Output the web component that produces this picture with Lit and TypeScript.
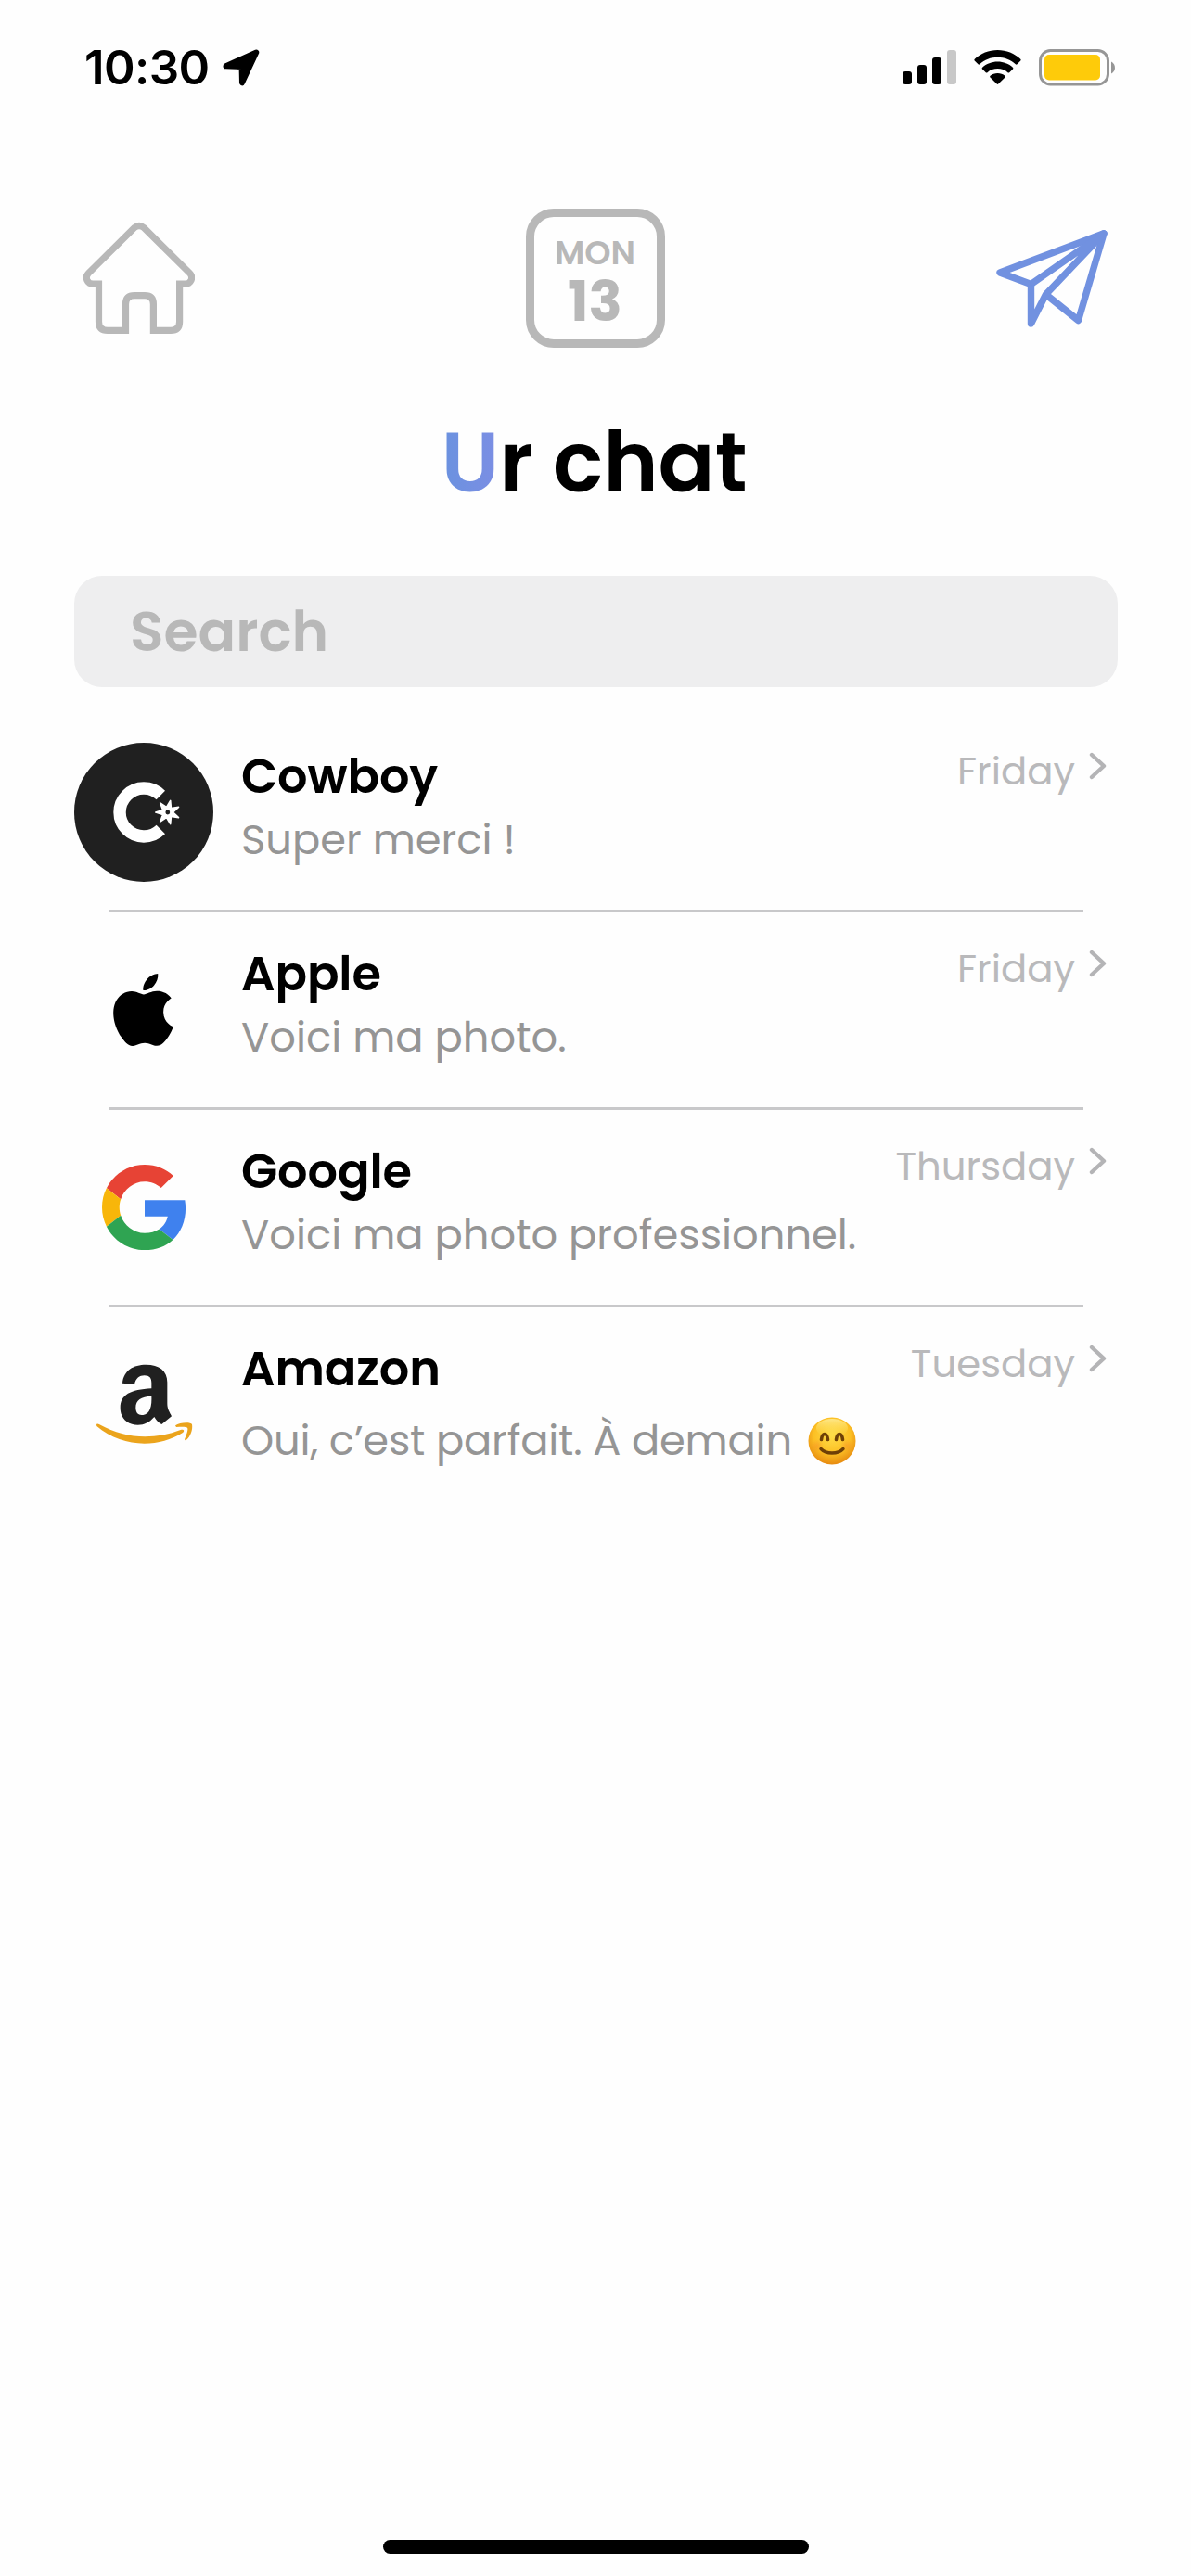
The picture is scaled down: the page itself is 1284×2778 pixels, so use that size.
import { LitElement, html, css, TemplateResult } from "lit";
import { customElement, property } from "lit/decorators.js";

interface Chat {
  name: string;
  message: string;
  day: string;
  logo: TemplateResult;
  emoji?: boolean;
}

const starPoints = Array.from({ length: 14 }, (_, i) => {
  const angle = Math.PI + (i * Math.PI) / 7;
  const r = i % 2 === 0 ? 13 : 5.8;
  return `${(100.8 + r * Math.cos(angle)).toFixed(2)},${(75 + r * Math.sin(angle)).toFixed(2)}`;
}).join(" ");

const cowboyLogo = html`<svg class="logo" viewBox="0 0 150 150" role="img" aria-label="Cowboy">
  <circle cx="75" cy="75" r="75" fill="#202020" />
  <path d="M95.500 56.500A26 26 0 1 0 95.500 93.500" transform="translate(-2.200 0)" fill="none" stroke="#fff" stroke-width="13.400" />
  <circle cx="100.800" cy="75" r="10.500" fill="#202020" />
  <polygon points=${starPoints} fill="#fff" stroke="#fff" stroke-width="1.600" stroke-linejoin="round" />
  <circle cx="100.800" cy="75" r="2.400" fill="#202020" />
</svg>`;

const appleLogo = html`<svg class="logo" viewBox="0 0 150 150" role="img" aria-label="Apple">
  <g transform="translate(34.900 36) scale(3.300 3.250)">
    <path
      d="M12.152 6.896c-.948 0-2.415-1.078-3.96-1.04-2.04.027-3.91 1.183-4.961 3.014-2.117 3.675-.546 9.103 1.519 12.09 1.013 1.454 2.208 3.09 3.792 3.039 1.52-.065 2.09-.987 3.935-.987 1.831 0 2.35.987 3.96.948 1.637-.026 2.676-1.48 3.676-2.948 1.156-1.688 1.636-3.325 1.662-3.415-.039-.013-3.182-1.221-3.22-4.857-.026-3.04 2.48-4.494 2.597-4.559-1.429-2.09-3.623-2.324-4.39-2.376-2-.156-3.675 1.09-4.61 1.09zM15.53 3.83c.843-1.012 1.4-2.427 1.245-3.83-1.207.052-2.662.805-3.532 1.818-.78.896-1.454 2.338-1.273 3.714 1.338.104 2.715-.688 3.559-1.701"
    />
  </g>
</svg>`;

const googleLogo = html`<svg class="logo" viewBox="0 0 150 150" role="img" aria-label="Google">
  <g transform="translate(30 29) scale(1.917)">
    <path fill="#e74335" d="M24 9.5c3.54 0 6.71 1.22 9.21 3.6l6.85-6.85C35.9 2.38 30.47 0 24 0 14.62 0 6.51 5.38 2.56 13.22l7.98 6.19C12.43 13.72 17.74 9.5 24 9.5z" />
    <path fill="#3f81ee" d="M46.98 24.55c0-1.57-.15-3.09-.38-4.55H24v9.02h12.94c-.58 2.96-2.26 5.48-4.78 7.18l7.73 6c4.51-4.18 7.09-10.36 7.09-17.65z" />
    <path fill="#f8b60a" d="M10.53 28.59c-.48-1.45-.76-2.99-.76-4.59s.27-3.14.76-4.59l-7.98-6.19C.92 16.46 0 20.12 0 24c0 3.88.92 7.54 2.56 10.78l7.97-6.19z" />
    <path fill="#2fa452" d="M24 48c6.48 0 11.93-2.13 15.89-5.81l-7.73-6c-2.15 1.45-4.92 2.3-8.16 2.3-6.26 0-11.57-4.22-13.47-9.91l-7.98 6.19C6.51 42.62 14.62 48 24 48z" />
  </g>
</svg>`;

const amazonLogo = html`<svg class="logo" viewBox="30 60 450 450" role="img" aria-label="Amazon">
  <path
    fill="#202020"
    d="M186 215C190 173 222 155 262 155C305 155 331 174 331 212V280C331 298 336 304 345 322L313 348C304 345 296 335 289 324C273 342 257 350 236 350C202 350 179 328 179 295C179 252 212 236 280 232V214C280 198 274 190 257 190C241 190 229 199 225 219ZM280 257C246 258 229 270 229 294C229 309 236 318 248 318C270 318 282 300 280 257Z"
  />
  <path
    fill="#eba41c"
    d="M102 350C103 345 107 346 112 349C198 397 290 398 374 366C384 363 388 369 381 375C300 426 184 423 103 354Z"
  />
  <path fill="#eba41c" d="M357 352C370 342 406 340 411 348C414 366 406 388 392 399C388 401 386 398 388 394C396 375 399 363 396 359C390 355 372 357 360 357Z" />
</svg>`;

const emoji = html`<svg class="emoji" viewBox="0 0 52 52" role="img" aria-label="😊">
  <defs>
    <radialGradient id="face" cx=".5" cy=".38" r=".64">
      <stop offset="0" stop-color="#ffdc48" />
      <stop offset=".6" stop-color="#fcc024" />
      <stop offset="1" stop-color="#e5850e" />
    </radialGradient>
    <linearGradient id="shine" x1="0" y1="0" x2="0" y2="1">
      <stop offset="0" stop-color="#fff3a8" stop-opacity=".75" />
      <stop offset="1" stop-color="#ffe04a" stop-opacity="0" />
    </linearGradient>
    <radialGradient id="blush">
      <stop offset="0" stop-color="#f5802a" stop-opacity=".4" />
      <stop offset="1" stop-color="#f5802a" stop-opacity="0" />
    </radialGradient>
  </defs>
  <circle cx="26" cy="26" r="25.500" fill="url(#face)" />
  <ellipse cx="26" cy="12" rx="17" ry="10" fill="url(#shine)" />
  <circle cx="10" cy="31" r="7" fill="url(#blush)" />
  <circle cx="42" cy="31" r="7" fill="url(#blush)" />
  <g fill="none" stroke="#6f4007" stroke-linecap="round">
    <path d="M14.500 24.500C15.500 16.500 20.500 16.500 21.500 24.500M30.500 24.500C31.500 16.500 36.500 16.500 37.500 24.500" stroke-width="3.600" />
    <path d="M14 34.500C19.500 40.500 32.500 40.500 38 34.500" stroke-width="3.400" />
  </g>
</svg>`;

const chats: Chat[] = [
  { name: "Cowboy", message: "Super merci !", day: "Friday", logo: cowboyLogo },
  { name: "Apple", message: "Voici ma photo.", day: "Friday", logo: appleLogo },
  { name: "Google", message: "Voici ma photo professionnel.", day: "Thursday", logo: googleLogo },
  { name: "Amazon", message: "Oui, c’est parfait. À demain", day: "Tuesday", logo: amazonLogo, emoji: true },
];

@customElement("status-bar")
class StatusBar extends LitElement {
  static styles = css`
    :host {
      display: flex;
      justify-content: space-between;
      align-items: center;
      height: 145px;
      padding: 0 82px 0 91px;
      box-sizing: border-box;
    }
    .time {
      display: flex;
      align-items: center;
      gap: 14px;
      font: 600 51px/60px Inter, sans-serif;
      letter-spacing: -0.6px;
    }
    svg {
      display: block;
    }
  `;
  render() {
    return html`
      <div class="time">
        <span>10:30</span>
        <svg width="40" height="40" viewBox="0 0 40 40">
          <path d="M36.300 3.500L21 36.300L20.600 19L3.500 18.300Z" stroke="#000" stroke-width="6" stroke-linejoin="round" />
        </svg>
      </div>
      <svg width="229" height="40" viewBox="973 53 229 40">
        <rect x="973" y="77" width="10" height="14" rx="3" />
        <rect x="989" y="70" width="10" height="21" rx="3" />
        <rect x="1005" y="62" width="10" height="29" rx="3" />
        <rect x="1021" y="54" width="10" height="37" rx="3" fill="#c8c8c8" />
        <path
          d="M1075.500 54C1085 54 1093.800 57.600 1100.200 63.800C1100.800 64.400 1100.800 65 1100.300 65.500L1096.500 69.300C1096 69.800 1095.400 69.800 1094.800 69.300C1089.500 64.400 1082.800 61.700 1075.500 61.700S1061.500 64.400 1056.200 69.300C1055.600 69.800 1055 69.800 1054.500 69.300L1050.700 65.500C1050.200 65 1050.200 64.400 1050.800 63.800C1057.200 57.600 1066 54 1075.500 54Z"
        />
        <path
          d="M1075.500 66.500C1081.800 66.500 1087.600 68.800 1091.900 72.700C1092.500 73.300 1092.500 73.900 1092 74.400L1088.200 78.200C1087.700 78.700 1087.100 78.700 1086.500 78.200C1083.500 75.600 1079.700 74.100 1075.500 74.100S1067.500 75.600 1064.500 78.200C1063.900 78.700 1063.300 78.700 1062.800 78.200L1059 74.400C1058.500 73.900 1058.500 73.300 1059.100 72.700C1063.400 68.800 1069.200 66.500 1075.500 66.500Z"
        />
        <path
          d="M1075.500 79C1078.500 79 1081.300 80 1083.400 81.800C1084 82.300 1084 82.900 1083.500 83.400L1076.300 90.600C1075.800 91.100 1075.200 91.100 1074.700 90.600L1067.500 83.400C1067 82.900 1067 82.300 1067.600 81.800C1069.700 80 1072.500 79 1075.500 79Z"
        />
        <rect x="1121.500" y="54.500" width="73" height="36.500" rx="11" fill="none" stroke="#969696" stroke-width="3" />
        <rect x="1126" y="59" width="60" height="27.500" rx="5" fill="#fecb0a" />
        <path d="M1198 66.500C1203.300 69 1203.300 77 1198 79.500Z" fill="#969696" />
      </svg>
    `;
  }
}

@customElement("nav-bar")
class NavBar extends LitElement {
  static styles = css`
    :host {
      display: flex;
      justify-content: space-between;
      margin-top: 80px;
      padding: 0 90px;
    }
    svg {
      display: block;
    }
    .calendar {
      box-sizing: border-box;
      width: 150px;
      height: 150px;
      padding: 21px 1px 0 0;
      border: 9px solid #b8b8b8;
      border-radius: 30px;
      color: #b8b8b8;
      text-align: center;
      display: flex;
      flex-direction: column;
      gap: 4px;
    }
    .weekday {
      font-size: 36px;
      line-height: 36px;
      font-weight: 600;
    }
    .date {
      font-size: 60px;
      line-height: 60px;
      font-weight: 700;
    }
  `;
  render() {
    return html`
      <svg width="120" height="150" viewBox="90 225 120 150" fill="none" stroke="#b8b8b8" stroke-width="7.200">
        <path
          d="M145 245.500Q150 241.500 155 245.500L204.500 294.500C209 299 206 306.200 199.500 306.200H193.600V347Q193.600 356.400 184 356.400H165.400V328Q165.400 318.700 156 318.700H145Q135.500 318.700 135.500 328V356.400H116Q106.500 356.400 106.500 347V306.200H100.500C94 306.200 91 299 95.500 294.500Z"
        />
      </svg>
      <div class="calendar">
        <span class="weekday">MON</span>
        <span class="date">13</span>
      </div>
      <svg width="120" height="150" viewBox="1074 225 120 150" fill="none" stroke="#7191e0" stroke-width="7.400" stroke-linejoin="round">
        <path d="M1190 251.800L1078 294L1111.500 306.500V349L1127.500 317.500L1162.500 345.500Z" />
        <path d="M1111.500 306.500L1190 251.800L1127.500 317.500" />
      </svg>
    `;
  }
}

@customElement("chat-row")
class ChatRow extends LitElement {
  @property({ attribute: false }) chat!: Chat;

  static styles = css`
    :host {
      display: grid;
      grid-template-columns: 150px 1fr auto;
      column-gap: 30px;
      height: 180px;
    }
    .logo {
      display: block;
      width: 150px;
      height: 150px;
    }
    .text {
      padding-top: 6px;
      white-space: nowrap;
    }
    .name {
      font-size: 51px;
      line-height: 60px;
      font-weight: 600;
      letter-spacing: -0.1px;
    }
    .message {
      display: flex;
      align-items: center;
      gap: 17px;
      margin-top: 9px;
      font-size: 44.800px;
      line-height: 60px;
      color: #959595;
    }
    .message.tall {
      margin-top: 18px;
      letter-spacing: -0.200px;
    }
    .emoji {
      display: block;
      width: 52px;
      height: 52px;
    }
    .day {
      display: flex;
      gap: 15px;
      padding: 5.500px 10px 0 0;
      font-size: 41.800px;
      line-height: 50px;
      color: #b9b9bb;
    }
    .chevron {
      display: block;
      margin-top: 4px;
    }
  `;
  render() {
    const { name, message, day, logo, emoji: withEmoji } = this.chat;
    return html`
      ${logo}
      <div class="text">
        <div class="name">${name}</div>
        <div class="message ${withEmoji ? "tall" : ""}"><span>${message}</span>${withEmoji ? emoji : ""}</div>
      </div>
      <div class="day">
        <span>${day}</span>
        <svg class="chevron" width="20" height="30" viewBox="0 0 20 30">
          <path d="M3 3L16 15L3 27" fill="none" stroke="#b4b4b6" stroke-width="4.400" stroke-linecap="round" stroke-linejoin="round" />
        </svg>
      </div>
    `;
  }
}

@customElement("app-root")
class AppRoot extends LitElement {
  static styles = css`
    :host {
      display: flex;
      flex-direction: column;
      box-sizing: border-box;
      width: 100%;
      height: 2778px;
      background: #fefefe;
      color: #000;
      font-family: Poppins, Inter, sans-serif;
    }
    h1 {
      margin: 69px 3px 0 0;
      font-size: 90px;
      line-height: 110px;
      font-weight: 600;
      text-align: center;
    }
    .accent {
      background: linear-gradient(90deg, #6a92df, #7c8ee4);
      -webkit-background-clip: text;
      background-clip: text;
      color: transparent;
    }
    .search {
      margin: 67px 79px 0 80px;
      padding-left: 60px;
      border-radius: 30px;
      background: #eeeeef;
      color: #b8b8b8;
      font-size: 60px;
      line-height: 120px;
      font-weight: 600;
    }
    .list {
      display: flex;
      flex-direction: column;
      flex: 1;
      padding: 60px 80px 0;
    }
    .divider {
      height: 3px;
      margin: 0 36px 30px 38px;
      background: #c8c8ca;
    }
    .home-indicator {
      width: 459px;
      height: 15px;
      margin: 0 auto 24px;
      border-radius: 8px;
      background: #000;
    }
  `;
  render() {
    return html`
      <status-bar></status-bar>
      <nav-bar></nav-bar>
      <h1><span class="accent">U</span>r chat</h1>
      <div class="search">Search</div>
      <div class="list">
        ${chats.map(
          (chat, i) => html`${i > 0 ? html`<div class="divider"></div>` : ""}<chat-row .chat=${chat}></chat-row>`
        )}
      </div>
      <div class="home-indicator"></div>
    `;
  }
}
